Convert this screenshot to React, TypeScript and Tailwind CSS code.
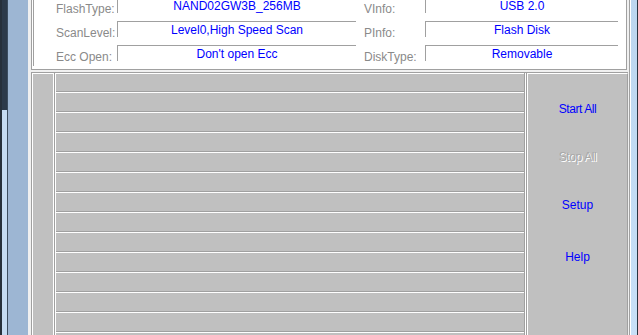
export default function App() {
  const rows = Array.from({ length: 14 }, (_, i) => i);
  const info = [
    ["FlashType:", "NAND02GW3B_256MB", "VInfo:", "USB 2.0"],
    ["ScanLevel:", "Level0,High Speed Scan", "PInfo:", "Flash Disk"],
    ["Ecc Open:", "Don't open Ecc", "DiskType:", "Removable"],
  ];
  return (
    <div className="w-[638px] h-[335px] overflow-hidden flex bg-[#f0f0f0] font-['Liberation_Sans',Arial,sans-serif] text-[12px] leading-[14px]">
      {/* left window decoration */}
      <div className="w-[2px] shrink-0 bg-[#26303b]" />
      <div className="w-[5px] shrink-0 flex flex-col">
        <div className="h-[110px] bg-[#2c3a4a]" />
        <div className="flex-1 bg-[#c4dbf2]" />
      </div>
      <div className="w-[1px] shrink-0 bg-[#3b4d60]" />
      <div className="w-[20px] shrink-0 bg-[#9db6d3]" />

      {/* main */}
      <div className="w-[601px] shrink-0 flex flex-col pl-[3px] pr-[1px]">
        {/* info panel */}
        <div className="h-[70px] shrink-0 mr-[1px] bg-white border-l border-r border-b border-[#a0a0a0] overflow-hidden">
          <div className="ml-[1px] h-full border-l border-[#a0a0a0]">
            <div className="-mt-[3px] flex flex-col">
              {info.map(([l1, v1, l2, v2]) => (
                <div key={l1} className="flex h-[24px]">
                  <div className="w-[83px] pl-[22px] pt-[5px] text-[#8a8a8a] whitespace-nowrap">{l1}</div>
                  <div className="w-[239px] h-[16px] border-t border-l border-[#a0a0a0] pt-[1px] text-center text-[#0000ff] whitespace-nowrap">
                    {v1}
                  </div>
                  <div className="w-[8px]" />
                  <div className="w-[61px] pt-[5px] text-[#8a8a8a] whitespace-nowrap">{l2}</div>
                  <div className="w-[193px] h-[16px] border-t border-l border-[#a0a0a0] pt-[1px] text-center text-[#0000ff] whitespace-nowrap">
                    {v2}
                  </div>
                </div>
              ))}
            </div>
          </div>
        </div>

        {/* lower area */}
        <div className="mt-[2px] flex-1 flex border-t border-l border-[#a0a0a0]">
          <div className="w-[22px] shrink-0 bg-[#c0c0c0] border-l border-t border-r border-white" />
          <div className="w-[1px] shrink-0 bg-[#a0a0a0]" />
          <div className="w-[470px] shrink-0 flex flex-col border-l border-r border-l-white border-r-[#a0a0a0]">
            {rows.map((i) => (
              <div
                key={i}
                className={`${i === 0 ? "h-[19px]" : "h-[20px]"} shrink-0 bg-[#c0c0c0] border-t border-b border-t-white border-b-[#a0a0a0]`}
              />
            ))}
          </div>
          <div className="w-[1px] shrink-0 bg-white" />
          <div className="w-[1px] shrink-0 bg-[#a0a0a0]" />
          <div className="w-[101px] shrink-0 bg-[#c0c0c0] border-l border-t border-r border-l-white border-t-white border-r-[#a0a0a0] flex flex-col items-center pt-[28px]">
            <div className="text-[#0000ff] tracking-[-0.4px]">Start All</div>
            <div className="mt-[34px] text-[#a8a8a8] tracking-[-0.4px] [text-shadow:1px_1px_0_#ffffff]">Stop All</div>
            <div className="mt-[34px] text-[#0000ff]">Setup</div>
            <div className="mt-[38px] text-[#0000ff]">Help</div>
          </div>
        </div>
      </div>

      {/* right window decoration */}
      <div className="w-[1px] shrink-0 bg-[#a0a0a0]" />
      <div className="w-[1px] shrink-0 bg-white" />
      <div className="w-[6px] shrink-0 bg-gradient-to-b from-[#bcd6ef] to-[#c8e0f8]" />
      <div className="w-[1px] shrink-0 bg-[#2a3440]" />
    </div>
  );
}
